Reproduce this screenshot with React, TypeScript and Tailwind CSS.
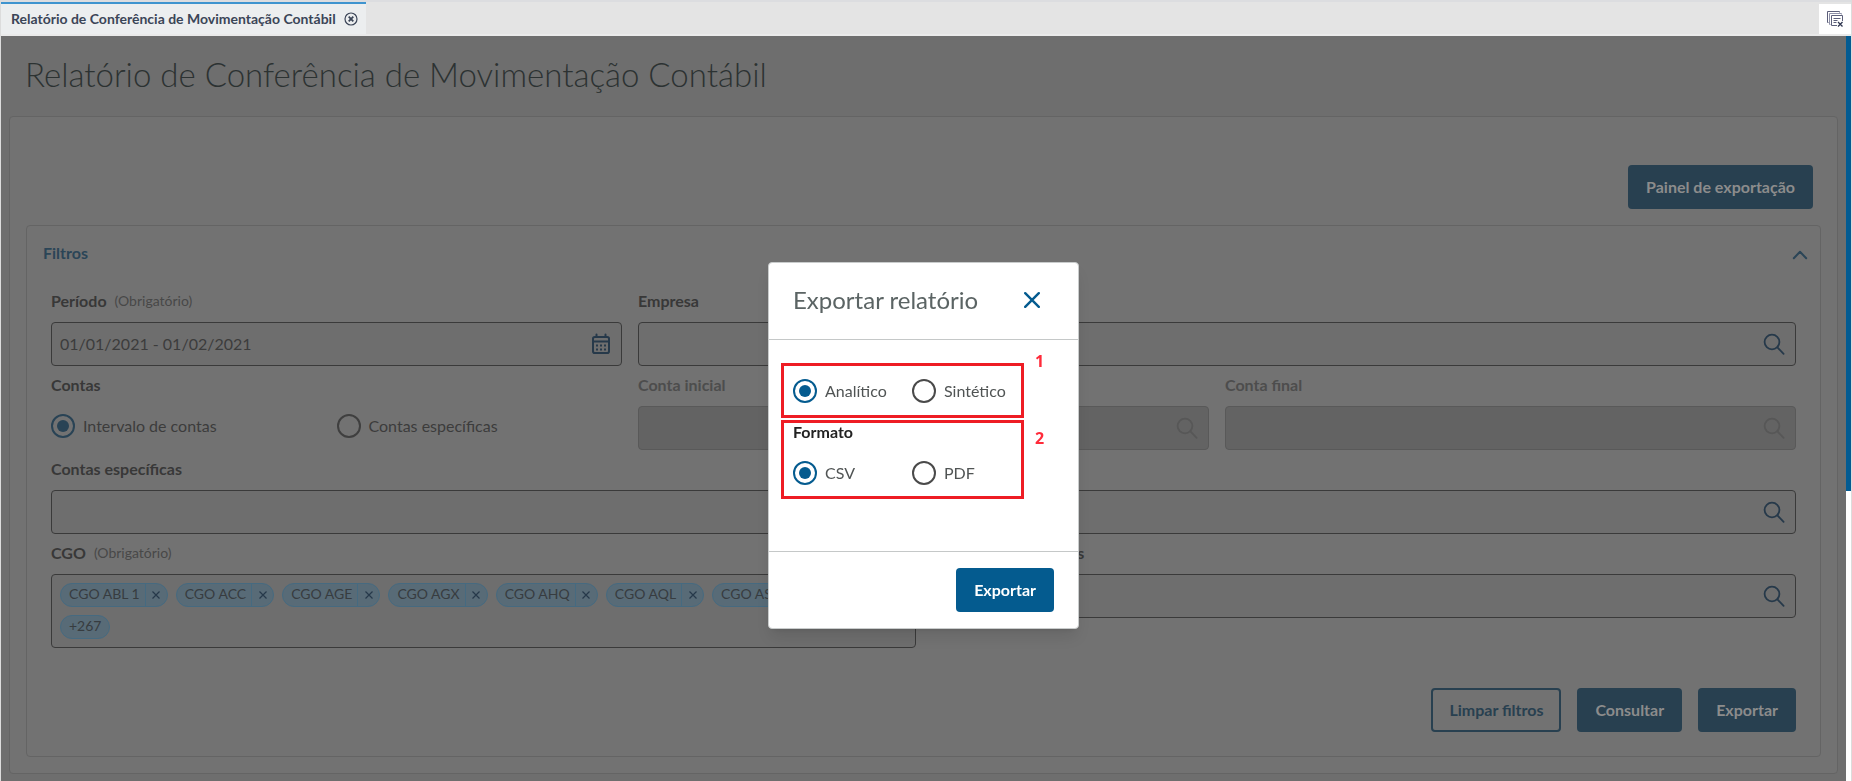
import React, { useState } from "react";

const blue = "text-[#26394a]";

function SearchIcon() {
  return (
    <svg viewBox="0 0 22 22" className="h-[22px] w-[22px]" fill="none" stroke="currentColor" strokeWidth="1.8" strokeLinecap="round" aria-hidden="true">
      <circle cx="9" cy="9" r="7.4" />
      <path d="M14.4 14.4 20.6 20.8" />
    </svg>
  );
}

function CalendarIcon() {
  return (
    <svg viewBox="0 0 20 22" className="h-[22px] w-5" fill="none" stroke="currentColor" aria-hidden="true">
      <rect x="2" y="4" width="16" height="16" rx="1.8" strokeWidth="2" />
      <path d="M2 8.500h16" strokeWidth="2" />
      <path d="M5.500 1.500V4M14.500 1.500V4" strokeWidth="2" strokeLinecap="round" />
      <path d="M5 12.500h2M9 12.500h2M13 12.500h2M5 16.500h2M9 16.500h2M13 16.500h2" strokeWidth="1.8" />
    </svg>
  );
}

function CloseAllIcon() {
  return (
    <svg viewBox="0 0 16 16" className="h-4 w-4" fill="none" stroke="#5c5f7a" strokeWidth="1" aria-hidden="true">
      <path d="M1.500 11.500h-1v-11h12v1" />
      <path d="M3.500 13.500h-1v-11h12v1" stroke="#8f91a8" />
      <path d="M10 14.500H4.500v-10h11V10" />
      <path d="M6.500 7.500h7M6.500 9.500h4M6.500 11.500h3" />
      <path d="m11 11 4.500 4.500m0-4.500L11 15.500" stroke="#2f3650" strokeWidth="1.300" />
    </svg>
  );
}

type FieldProps = {
  id: string;
  label: string;
  required?: boolean;
  disabled?: boolean;
  value?: string;
  icon?: React.ReactNode;
  className?: string;
};

function FieldLabel({ id, label, required, disabled }: { id: string; label: string; required?: boolean; disabled?: boolean }) {
  return (
    <label htmlFor={id} className={`flex h-10 items-center gap-2 pb-0.5 text-base font-bold ${disabled ? "text-[#4d4d4d]" : "text-[#383838]"}`}>
      {label}
      {required && <span className="text-sm font-normal text-[#484848]">(Obrigatório)</span>}
    </label>
  );
}

function Field({ id, label, required, disabled, value, icon, className = "" }: FieldProps) {
  return (
    <div className={className}>
      <FieldLabel id={id} label={label} required={required} disabled={disabled} />
      <div className={`flex h-11 items-center rounded border pr-2.5 pl-2 ${disabled ? "border-[#595959] bg-[#636363] text-[#575757]" : "border-[#3a3a3a] bg-[#6e6e6e] text-[#3c3c3c]"}`}>
        <input id={id} type="text" defaultValue={value} disabled={disabled} className="min-w-0 flex-1 bg-transparent text-base outline-none" />
        <button type="button" disabled={disabled} aria-label={label} className={disabled ? "text-[#575757]" : blue}>
          {icon ?? <SearchIcon />}
        </button>
      </div>
    </div>
  );
}

function Radio({ name, label, checked, onChange, dimmed }: { name: string; label: string; checked: boolean; onChange: () => void; dimmed?: boolean }) {
  const tone = dimmed
    ? "border-[#3f3f3f] checked:border-[#294355] before:bg-[#294355]"
    : "border-[#4a4a4a] checked:border-[#045b8f] before:bg-[#045b8f]";
  return (
    <label className={`flex h-10 items-center gap-2 text-base ${dimmed ? "text-[#3c3c3c]" : "text-[#505454]"}`}>
      <input
        type="radio"
        name={name}
        checked={checked}
        onChange={onChange}
        className={`grid h-6 w-6 shrink-0 appearance-none place-content-center rounded-full border-2 before:h-3 before:w-3 before:rounded-full before:opacity-0 before:content-[''] checked:before:opacity-100 ${tone}`}
      />
      {label}
    </label>
  );
}

const chips = ["CGO ABL 1", "CGO ACC", "CGO AGE", "CGO AGX", "CGO AHQ", "CGO AQL", "CGO ASL"];

function Chip({ text }: { text: string }) {
  return (
    <li className="flex h-6 items-stretch rounded-full border border-[#466a80] bg-[#586b77] text-sm text-[#373c40]">
      <span className="flex items-center pr-[5px] pb-0.5 pl-2">{text}</span>
      <button type="button" aria-label={`Remover ${text}`} className="flex w-[22px] items-center justify-center border-l border-[#466a80] text-[#26394a]">
        <svg viewBox="0 0 8 8" className="h-2 w-2" stroke="currentColor" strokeWidth="1.2" aria-hidden="true">
          <path d="m.5.5 7 7m0-7-7 7" />
        </svg>
      </button>
    </li>
  );
}

export default function App() {
  const [contas, setContas] = useState("intervalo");
  const [tipo, setTipo] = useState("analitico");
  const [formato, setFormato] = useState("csv");

  return (
    <div className="flex min-h-screen flex-col border-x border-[#dcdcdc] bg-[#6e6e6e] font-['Lato',sans-serif]">
      <header className="flex h-9 justify-between border-t-2 border-b-2 border-t-[#dcdde0] border-b-[#eaeaea] bg-[#e4e4e4]">
        <div className="flex items-center gap-2 border-t-2 border-[#3f94cf] bg-[#eceeef] pr-2 pl-2.5 text-sm font-bold text-[#3b4557]">
          <span>Relatório de Conferência de Movimentação Contábil</span>
          <button type="button" aria-label="Fechar aba">
            <svg viewBox="0 0 14 14" className="h-3.5 w-3.5" fill="none" stroke="currentColor" aria-hidden="true">
              <circle cx="7" cy="7" r="6" strokeWidth="1.200" />
              <path d="m4.700 4.700 4.600 4.600m0-4.600L4.700 9.300" strokeWidth="1.800" />
            </svg>
          </button>
        </div>
        <button type="button" aria-label="Fechar todas as abas" className="mt-0.5 flex w-8 items-center justify-center bg-white">
          <CloseAllIcon />
        </button>
      </header>

      <div className="flex flex-1">
        <main className="min-w-0 flex-1 px-2 pb-[7px]">
          <h1 className="flex h-20 items-center pb-0.5 pl-4 text-[33px] font-light text-[#2c3232]">
            Relatório de Conferência de Movimentação Contábil
          </h1>
          <section className="rounded border border-[#646464] bg-[#727272] px-4 pt-12 pb-4">
            <div className="flex justify-end pr-2">
              <button type="button" className="h-11 rounded bg-[#284050] px-[18px] text-base font-bold text-[#8c8c8c]">
                Painel de exportação
              </button>
            </div>
            <section className="mt-4 rounded border border-[#646464]">
              <button type="button" aria-expanded="true" className="flex h-14 w-full items-center justify-between pr-3 pb-0.5 pl-4 text-base font-bold text-[#2b4557]">
                Filtros
                <svg viewBox="0 0 16 10" className="mt-1 h-2.5 w-4" fill="none" stroke="currentColor" strokeWidth="2" strokeLinecap="round" strokeLinejoin="round" aria-hidden="true">
                  <path d="m1.800 8.200 6.200-6.400 6.200 6.400" />
                </svg>
              </button>
              <form className="px-6 pb-6" onSubmit={(e) => e.preventDefault()}>
                <div className="grid grid-cols-3 gap-x-4">
                  <Field id="periodo" label="Período" required value="01/01/2021 - 01/02/2021" icon={<CalendarIcon />} />
                  <Field id="empresa" label="Empresa" className="col-span-2" />
                  <fieldset>
                    <legend className="flex h-10 items-center pb-0.5 text-base font-bold text-[#383838]">Contas</legend>
                    <div className="grid grid-cols-2">
                      <Radio dimmed name="contas" label="Intervalo de contas" checked={contas === "intervalo"} onChange={() => setContas("intervalo")} />
                      <Radio dimmed name="contas" label="Contas específicas" checked={contas === "especificas"} onChange={() => setContas("especificas")} />
                    </div>
                  </fieldset>
                  <Field id="conta-inicial" label="Conta inicial" disabled />
                  <Field id="conta-final" label="Conta final" disabled />
                  <Field id="contas-especificas" label="Contas específicas" className="col-span-3" />
                </div>
                <div className="grid grid-cols-2 gap-x-4">
                  <div>
                    <FieldLabel id="cgo" label="CGO" required />
                    <div className="rounded border border-[#3a3a3a] bg-[#6e6e6e] p-2">
                      <ul className="flex flex-wrap gap-2 pr-20">
                        {chips.map((c) => (
                          <Chip key={c} text={c} />
                        ))}
                        <li>
                          <button id="cgo" type="button" className="flex h-6 items-center rounded-full border border-[#466a80] bg-[#586b77] px-2 pb-0.5 text-sm text-[#373c40]">
                            +267
                          </button>
                        </li>
                      </ul>
                    </div>
                  </div>
                  <Field id="resultados" label="Contas de Resultados" />
                </div>
                <div className="mt-10 flex justify-end gap-4">
                  <button type="button" className="h-11 rounded border-2 border-[#284050] px-4 text-base font-bold text-[#284050]">Limpar filtros</button>
                  <button type="button" className="h-11 rounded bg-[#284050] px-[18px] text-base font-bold text-[#8c8c8c]">Consultar</button>
                  <button type="button" className="h-11 rounded bg-[#284050] px-[18px] text-base font-bold text-[#8c8c8c]">Exportar</button>
                </div>
              </form>
            </section>
          </section>
        </main>
        <div className="flex w-[5px] flex-col bg-white">
          <div className="h-[455px] bg-[#035b92]" />
        </div>
      </div>

      <div className="pointer-events-none fixed inset-x-0 top-0 flex justify-center pt-[262px] pr-[5px]">
        <div role="dialog" aria-modal="true" aria-labelledby="export-title" className="pointer-events-auto w-[311px] rounded border border-[#c9cccc] bg-white shadow-lg">
          <div className="flex h-[77px] items-center justify-between border-b border-[#c5c8c8] pr-[38px] pb-0.5 pl-6">
            <h2 id="export-title" className="text-2xl text-[#5b6464]">Exportar relatório</h2>
            <button type="button" aria-label="Fechar" className="text-[#045b8f]">
              <svg viewBox="0 0 16 16" className="h-4 w-4" stroke="currentColor" strokeWidth="2.400" strokeLinecap="round" aria-hidden="true">
                <path d="m1.200 1.200 13.600 13.600m0-13.600L1.200 14.800" />
              </svg>
            </button>
          </div>
          <div className="flex h-[212px] flex-col gap-0.5 border-b border-[#c5c8c8] pt-[23px] pl-3">
            <div className="flex items-start gap-[11px]">
              <div className="grid h-[55px] w-[243px] grid-cols-[119px_1fr] border-[3px] border-[#ee1c24] py-[5px] pl-[9px]">
                <Radio name="tipo" label="Analítico" checked={tipo === "analitico"} onChange={() => setTipo("analitico")} />
                <Radio name="tipo" label="Sintético" checked={tipo === "sintetico"} onChange={() => setTipo("sintetico")} />
              </div>
              <span className="-mt-3 font-['Open_Sans',sans-serif] text-base leading-5 font-bold text-[#ff2b3a]">1</span>
            </div>
            <div className="flex items-start gap-[11px]">
              <fieldset className="h-[79px] w-[243px] border-[3px] border-[#ee1c24] pl-[9px]">
                <div className="flex h-[18px] items-center text-base font-bold text-[#222]">Formato</div>
                <div className="mt-3 grid grid-cols-[119px_1fr]">
                  <Radio name="formato" label="CSV" checked={formato === "csv"} onChange={() => setFormato("csv")} />
                  <Radio name="formato" label="PDF" checked={formato === "pdf"} onChange={() => setFormato("pdf")} />
                </div>
              </fieldset>
              <span className="mt-2 font-['Open_Sans',sans-serif] text-base leading-5 font-bold text-[#ff2b3a]">2</span>
            </div>
          </div>
          <div className="flex justify-end pt-4 pr-6 pb-4">
            <button type="button" className="h-11 rounded bg-[#045b8f] px-[18px] text-base font-bold text-white">Exportar</button>
          </div>
        </div>
      </div>
    </div>
  );
}
